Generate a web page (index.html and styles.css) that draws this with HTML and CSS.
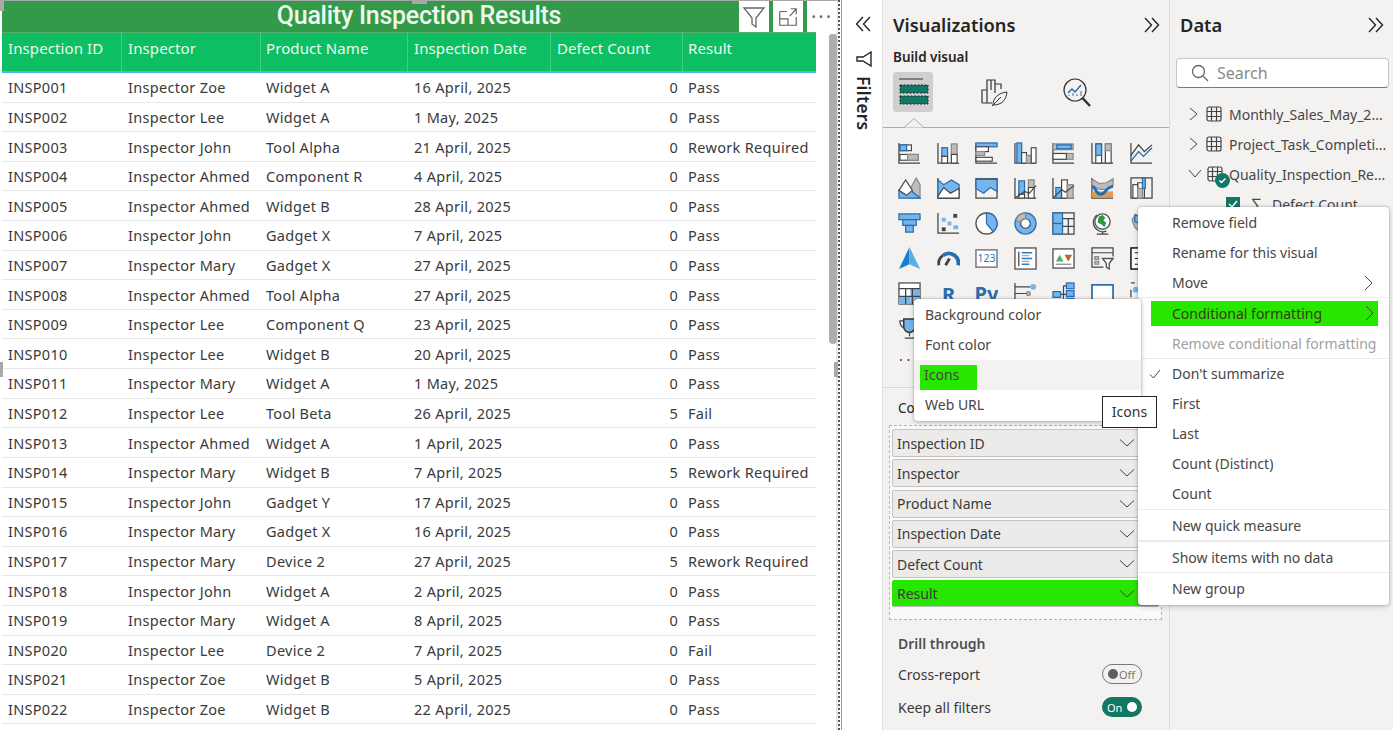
FILE: index.html
```html
<!DOCTYPE html>
<html lang="en">
<head>
<meta charset="utf-8">
<title>Quality Inspection Results</title>
<link rel="stylesheet" href="styles.css">
</head>
<body>
<main class="report">
  <header class="title-bar"><h1>Quality Inspection Results</h1></header>
  <div class="visual-actions">
    <span class="action"><svg viewBox="0 0 24 24" width="24" height="24"><path class="thin" d="M2 3h20l-8 10v9l-4-3v-6z"/></svg></span>
    <span class="action"><svg viewBox="0 0 24 24" width="22" height="22"><path class="thin" d="M3 6h8M3 6v15h18v-9M3 14h9v7M14 11l7-8M15 3h6v6"/></svg></span>
    <span class="action dots">···</span>
  </div>
  <div class="table">
    <div class="row head"><span>Inspection ID</span><span>Inspector</span><span>Product Name</span><span>Inspection Date</span><span>Defect Count</span><span>Result</span></div>
    <div class="row"><span>INSP001</span><span>Inspector Zoe</span><span>Widget A</span><span>16 April, 2025</span><span class="num">0</span><span>Pass</span></div>
    <div class="row"><span>INSP002</span><span>Inspector Lee</span><span>Widget A</span><span>1 May, 2025</span><span class="num">0</span><span>Pass</span></div>
    <div class="row"><span>INSP003</span><span>Inspector John</span><span>Tool Alpha</span><span>21 April, 2025</span><span class="num">0</span><span>Rework Required</span></div>
    <div class="row"><span>INSP004</span><span>Inspector Ahmed</span><span>Component R</span><span>4 April, 2025</span><span class="num">0</span><span>Pass</span></div>
    <div class="row"><span>INSP005</span><span>Inspector Ahmed</span><span>Widget B</span><span>28 April, 2025</span><span class="num">0</span><span>Pass</span></div>
    <div class="row"><span>INSP006</span><span>Inspector John</span><span>Gadget X</span><span>7 April, 2025</span><span class="num">0</span><span>Pass</span></div>
    <div class="row"><span>INSP007</span><span>Inspector Mary</span><span>Gadget X</span><span>27 April, 2025</span><span class="num">0</span><span>Pass</span></div>
    <div class="row"><span>INSP008</span><span>Inspector Ahmed</span><span>Tool Alpha</span><span>27 April, 2025</span><span class="num">0</span><span>Pass</span></div>
    <div class="row"><span>INSP009</span><span>Inspector Lee</span><span>Component Q</span><span>23 April, 2025</span><span class="num">0</span><span>Pass</span></div>
    <div class="row"><span>INSP010</span><span>Inspector Lee</span><span>Widget B</span><span>20 April, 2025</span><span class="num">0</span><span>Pass</span></div>
    <div class="row"><span>INSP011</span><span>Inspector Mary</span><span>Widget A</span><span>1 May, 2025</span><span class="num">0</span><span>Pass</span></div>
    <div class="row"><span>INSP012</span><span>Inspector Lee</span><span>Tool Beta</span><span>26 April, 2025</span><span class="num">5</span><span>Fail</span></div>
    <div class="row"><span>INSP013</span><span>Inspector Ahmed</span><span>Widget A</span><span>1 April, 2025</span><span class="num">0</span><span>Pass</span></div>
    <div class="row"><span>INSP014</span><span>Inspector Mary</span><span>Widget B</span><span>7 April, 2025</span><span class="num">5</span><span>Rework Required</span></div>
    <div class="row"><span>INSP015</span><span>Inspector John</span><span>Gadget Y</span><span>17 April, 2025</span><span class="num">0</span><span>Pass</span></div>
    <div class="row"><span>INSP016</span><span>Inspector Mary</span><span>Gadget X</span><span>16 April, 2025</span><span class="num">0</span><span>Pass</span></div>
    <div class="row"><span>INSP017</span><span>Inspector Mary</span><span>Device 2</span><span>27 April, 2025</span><span class="num">5</span><span>Rework Required</span></div>
    <div class="row"><span>INSP018</span><span>Inspector John</span><span>Widget A</span><span>2 April, 2025</span><span class="num">0</span><span>Pass</span></div>
    <div class="row"><span>INSP019</span><span>Inspector Mary</span><span>Widget A</span><span>8 April, 2025</span><span class="num">0</span><span>Pass</span></div>
    <div class="row"><span>INSP020</span><span>Inspector Lee</span><span>Device 2</span><span>7 April, 2025</span><span class="num">0</span><span>Fail</span></div>
    <div class="row"><span>INSP021</span><span>Inspector Zoe</span><span>Widget B</span><span>5 April, 2025</span><span class="num">0</span><span>Pass</span></div>
    <div class="row"><span>INSP022</span><span>Inspector Zoe</span><span>Widget B</span><span>22 April, 2025</span><span class="num">0</span><span>Pass</span></div>
  </div>
  <div class="scrollbar"></div>
  <i class="handle handle-top"></i>
  <i class="handle handle-corner"></i>
  <i class="handle handle-left"></i>
  <i class="handle handle-right"></i>
</main>
<div class="splitter"></div>

<aside class="filters">
  <svg class="chev" viewBox="0 0 18 18" width="18" height="18"><path class="line" d="M8 2 1.500 9 8 16M15 2 8.500 9 15 16"/></svg>
  <svg class="funnel" viewBox="0 0 18 18" width="18" height="18"><path class="line" d="M16 2v14L8 11H2V7h6z"/></svg>
  <span class="filters-label">Filters</span>
</aside>

<section class="viz">
  <div class="pane-head"><h2>Visualizations</h2><svg viewBox="0 0 18 18" width="18" height="18"><path class="line" d="M3 2 9.500 9 3 16M10 2 16.500 9 10 16"/></svg></div>
  <h3 class="build">Build visual</h3>
  <div class="tabs">
    <span class="tab active"><svg viewBox="0 0 36 36" width="36" height="36"><path d="M4 5h24" stroke="#333" stroke-width="1"/><rect class="tealbar" x="5" y="11" width="28" height="8"/><rect class="tealbar" x="5" y="22" width="28" height="8"/></svg></span>
    <span class="tab"><svg viewBox="0 0 32 32" width="32" height="32"><path class="dark" d="M3 27V14h5V4h8v13M8 14v13M12 4v10M16 8h6v5M3 27h10"/><path d="M14 29c0-7 5-12 14-13-1 8-5 13-14 13z" fill="#f3f2f1" stroke="#333"/><path d="M13 30 22 21" stroke="#333"/></svg></span>
    <span class="tab"><svg viewBox="0 0 32 32" width="32" height="32"><circle class="dark" cx="14" cy="14" r="11"/><path d="M21.500 22 29 30" stroke="#333" stroke-width="2.500"/><path d="M7 17l4-4 3 3 6-7" fill="none" stroke="#1d6fb8" stroke-width="1.500"/><path d="M8 20v-1M12 20v-3M16 20v-2M20 20v-5" stroke="#666"/></svg></span>
  </div>
  <div class="tabline"><svg viewBox="0 0 22 10" width="22" height="10"><path d="M0 9.500h1L11 .5l10 9h1" fill="#f3f2f1" stroke="#aaa"/></svg></div>

  <div class="gallery">
    <svg viewBox="0 0 24 24"><path class="k" d="M1 1v21h22"/><rect class="w" x="2" y="3" width="12" height="6"/><rect class="b" x="2" y="3" width="7" height="6"/><rect class="w" x="2" y="13" width="19" height="6"/><rect class="g" x="10" y="13" width="11" height="6"/></svg>
    <svg viewBox="0 0 24 24"><path class="k" d="M1 1v21h22"/><rect class="b" x="5" y="6" width="6" height="9"/><rect class="w" x="5" y="15" width="6" height="7"/><rect class="g" x="15" y="2" width="6" height="11"/><rect class="w" x="15" y="13" width="6" height="9"/></svg>
    <svg viewBox="0 0 24 24"><path class="k" d="M1 1v21h22"/><rect class="b" x="1" y="1" width="22" height="4"/><rect class="w" x="1" y="5" width="13" height="5"/><rect class="g" x="1" y="10" width="9" height="4"/><rect class="w" x="1" y="16" width="17" height="4"/></svg>
    <svg viewBox="0 0 24 24"><path class="k" d="M1 1v21h22"/><rect class="b" x="3" y="1" width="5" height="21"/><rect class="w" x="8" y="11" width="5" height="11"/><rect class="g" x="13" y="14" width="5" height="8"/><rect class="w" x="18" y="6" width="5" height="16"/></svg>
    <svg viewBox="0 0 24 24"><path class="k" d="M1 1v21h22"/><rect class="g" x="1" y="2" width="21" height="6"/><rect class="b" x="5" y="3" width="15" height="4"/><rect class="g" x="1" y="12" width="21" height="6"/><rect class="w" x="1" y="12" width="14" height="6"/></svg>
    <svg viewBox="0 0 24 24"><path class="k" d="M1 1v21h22"/><rect class="w" x="5" y="2" width="6" height="20"/><rect class="b" x="5" y="2" width="6" height="12"/><rect class="w" x="15" y="2" width="6" height="20"/><rect class="g" x="15" y="2" width="6" height="7"/></svg>
    <svg viewBox="0 0 24 24"><path class="k" d="M1 1v21h22"/><path class="l" d="M1 20 9 10l5 5 9-9"/><path class="kl" d="M1 14 9 3l6 7 8-7"/></svg>

    <svg viewBox="0 0 24 24"><path class="g" d="M13 12 19 1l4 7v14H12z"/><path class="b" d="M1 22v-8l6 4 5-5 11 9z"/><path class="wk" d="M1 14 8 3l7 11-6 5z"/></svg>
    <svg viewBox="0 0 24 24"><path class="k" d="M1 1v21h22"/><path class="b" d="M1 3l6 5 8-5 8 5v14H1z"/><path class="w" d="M1 20l6-9 7 6 9-5v10H1z"/></svg>
    <svg viewBox="0 0 24 24"><path class="k" d="M1 1v21h22V1"/><path class="b" d="M1 2h22v13l-7-4-7 6-8-5z"/><path class="k" d="M1 2h22"/></svg>
    <svg viewBox="0 0 24 24"><path class="k" d="M1 1v21h22"/><rect class="b" x="5" y="4" width="6" height="14"/><rect class="w" x="5" y="18" width="6" height="4"/><rect class="g" x="15" y="3" width="6" height="8"/><rect class="w" x="15" y="11" width="6" height="11"/><path class="kl" d="M1 22l6-4 4-3 5 2 7-8"/></svg>
    <svg viewBox="0 0 24 24"><path class="k" d="M1 1v21h22"/><rect class="b" x="4" y="11" width="6" height="11"/><rect class="w" x="10" y="3" width="6" height="19"/><rect class="g" x="16" y="8" width="6" height="14"/><path class="kl" d="M1 22l9-9 4 3 9-7"/></svg>
    <svg viewBox="0 0 24 24"><path class="k" d="M1 1v21h22"/><path class="g" d="M1 2l8 5 7-1 7-4v7l-7 4H9L1 9z"/><path class="o" d="M1 15h22v6H1z"/><path class="l2" d="M1 10c5 0 3 8 9 8s5-8 13-8"/></svg>
    <svg viewBox="0 0 24 24"><path class="k" d="M1 22h22V1H1zM8 22V6h7v16"/><rect class="w" x="3" y="8" width="5" height="14"/><rect class="g" x="8" y="12" width="5" height="10"/><rect class="b" x="13" y="1" width="3" height="11"/></svg>

    <svg viewBox="0 0 24 24"><rect class="b" x="1" y="2" width="22" height="6"/><rect class="b" x="5" y="8" width="14" height="6"/><rect class="b" x="8" y="14" width="8" height="7"/></svg>
    <svg viewBox="0 0 24 24"><path class="k" d="M1 1v21h22"/><rect class="lb" x="5" y="6" width="4" height="4"/><rect class="lb" x="11" y="10" width="4" height="4"/><rect class="dk" x="17" y="2" width="4" height="4"/><rect class="dk" x="5" y="16" width="4" height="4"/><rect class="lb" x="17" y="14" width="5" height="4"/></svg>
    <svg viewBox="0 0 24 24"><circle class="wk" cx="12" cy="12" r="11"/><path class="b" d="M12 1a11 11 0 0 1 7 19.500L12 12z"/></svg>
    <svg viewBox="0 0 24 24"><circle class="b" cx="12" cy="12" r="11"/><circle class="w" cx="12" cy="12" r="5"/><path class="g" d="M12 1A11 11 0 0 0 2 9l5 1.500A5 5 0 0 1 12 7z"/></svg>
    <svg viewBox="0 0 24 24"><path class="k" d="M1 1h22v22H1z"/><rect class="b" x="1" y="1" width="10" height="11"/><rect class="b" x="1" y="12" width="10" height="11"/><path class="k" d="M11 7h12M17 7v16M11 15h12"/></svg>
    <svg viewBox="0 0 24 24"><circle class="wk" cx="12" cy="10" r="8"/><path d="M8 5l4-2 3 3-2 3 3 2-2 5-3-3-4-2z" fill="#2c9a45"/><path class="k" d="M6 3a10 10 0 0 0 10 17M12 20v3M6 23h12"/></svg>
    <svg viewBox="0 0 24 24"><path class="g" d="M2 8 6 3l6 3 6-3 2 6-3 9-5 4-7-6z"/><path class="b" d="M5 3l7 2 6-2v8l-6 2-7-3z"/></svg>

    <svg viewBox="0 0 24 24"><path d="M12 0 1 23l11-5z" fill="#1b7fd0"/><path d="M12 0l11 23-11-5z" fill="#5aaee8"/></svg>
    <svg viewBox="0 0 24 24"><path class="kh" d="M2 19a10 10 0 0 1 4-10"/><path class="bh" d="M6 9a10 10 0 0 1 16 10"/><path class="kh" d="M9 19l4-7"/></svg>
    <svg viewBox="0 0 24 24"><rect class="wg" x="1" y="3" width="22" height="18"/><text class="ico-text" x="12" y="16">123</text></svg>
    <svg viewBox="0 0 24 24"><rect class="wk" x="1" y="1" width="22" height="22"/><path class="k" d="M5 5v15"/><path class="bl" d="M8 6h11M8 12h11M8 18h8"/><path class="gl" d="M8 9h8M8 15h8"/></svg>
    <svg viewBox="0 0 24 24"><rect class="wk" x="1" y="2" width="22" height="20"/><path d="M4 15l4-7 4 7z" fill="#4caf6a"/><path d="M13 8h8l-4 7z" fill="#b06a2c"/><path class="g" d="M4 18h16"/></svg>
    <svg viewBox="0 0 24 24"><path class="k" d="M13 21H1V1h22v9M1 6h22"/><path class="g" d="M4 10h4v3H4zM4 15h4v3H4z"/><path class="wk" d="M12 12h11l-4 5v6l-3-2v-4z"/></svg>
    <svg viewBox="0 0 24 24"><rect class="w" x="1" y="1" width="22" height="22"/><path class="k2" d="M1 1h22v22H1zM5 6h18M5 12h18M5 18h18"/></svg>

    <svg viewBox="0 0 24 24"><rect class="wk" x="1" y="1" width="22" height="22"/><rect class="lb" x="13" y="7" width="10" height="16"/><rect class="lb" x="1" y="15" width="12" height="8"/><path class="k" d="M1 7h22M1 15h22M8 7v16M15 7v16"/></svg>
    <svg viewBox="0 0 24 24"><text class="ico-r" x="12" y="21">R</text></svg>
    <svg viewBox="0 0 24 24"><text class="ico-py" x="12" y="20">Py</text></svg>
    <svg viewBox="0 0 24 24"><path class="k" d="M1 1v21M1 5h16M1 12h12M1 19h6"/><circle class="lb" cx="20" cy="5" r="3"/><circle class="g" cx="15" cy="12" r="2"/></svg>
    <svg viewBox="0 0 24 24"><rect class="b" x="1" y="10" width="8" height="6"/><rect class="b" x="15" y="1" width="8" height="6"/><rect class="b" x="15" y="9" width="8" height="6"/><rect class="b" x="15" y="17" width="8" height="6"/><path class="k" d="M9 13h6M12 4v16h3M12 4h3"/></svg>
    <svg viewBox="0 0 24 24"><rect class="bw" x="1" y="3" width="22" height="17"/></svg>
    <svg viewBox="0 0 24 24"><path class="k" d="M1 1h4M19 1h4M1 8v8M23 8v8"/><circle class="lb" cx="6" cy="8" r="3"/></svg>

    <svg viewBox="0 0 24 24"><path class="kb" d="M6 2h12v8a6 6 0 0 1-12 0z"/><path class="k" d="M6 4H2c0 5 2 7 5 8M18 4h4c0 5-2 7-5 8M12 16v4M7 22h10"/></svg>
  </div>

  <div class="more">· · ·</div>
  <div class="rule"></div>
  <div class="columns-label">Columns</div>
  <div class="well">
    <div class="field"><span>Inspection ID</span><svg viewBox="0 0 16 16" width="16" height="16"><path class="line-thin" d="M1 4.500 8 11l7-6.500"/></svg></div>
    <div class="field"><span>Inspector</span><svg viewBox="0 0 16 16" width="16" height="16"><path class="line-thin" d="M1 4.500 8 11l7-6.500"/></svg></div>
    <div class="field"><span>Product Name</span><svg viewBox="0 0 16 16" width="16" height="16"><path class="line-thin" d="M1 4.500 8 11l7-6.500"/></svg></div>
    <div class="field"><span>Inspection Date</span><svg viewBox="0 0 16 16" width="16" height="16"><path class="line-thin" d="M1 4.500 8 11l7-6.500"/></svg></div>
    <div class="field"><span>Defect Count</span><svg viewBox="0 0 16 16" width="16" height="16"><path class="line-thin" d="M1 4.500 8 11l7-6.500"/></svg></div>
    <div class="field hot"><span>Result</span><svg viewBox="0 0 16 16" width="16" height="16"><path class="line-thin" d="M1 4.500 8 11l7-6.500"/></svg></div>
  </div>
  <h4 class="drill">Drill through</h4>
  <div class="toggle-row"><span>Cross-report</span><span class="toggle off"><i></i>Off</span></div>
  <div class="toggle-row second"><span>Keep all filters</span><span class="toggle on">On<i></i></span></div>
</section>

<section class="data">
  <div class="pane-head"><h2>Data</h2><svg viewBox="0 0 18 18" width="18" height="18"><path class="line" d="M3 2 9.500 9 3 16M10 2 16.500 9 10 16"/></svg></div>
  <div class="search"><svg viewBox="0 0 18 18" width="18" height="18"><circle class="thin" cx="7.500" cy="7.500" r="6"/><path class="thin" d="M12 12l5 5"/></svg><span>Search</span></div>
  <ul class="tree">
    <li><svg class="caret" viewBox="0 0 12 14" width="12" height="14"><path class="line-thin" d="M2 1l7 6-7 6"/></svg><svg class="tbl" viewBox="0 0 16 16" width="16" height="16"><path class="grid-ico" d="M3 1h10a2 2 0 0 1 2 2v10a2 2 0 0 1-2 2H3a2 2 0 0 1-2-2V3a2 2 0 0 1 2-2zM1 5.500h14M1 10.500h14M5.500 1v14M10.500 1v14"/></svg><span>Monthly_Sales_May_2...</span></li>
    <li><svg class="caret" viewBox="0 0 12 14" width="12" height="14"><path class="line-thin" d="M2 1l7 6-7 6"/></svg><svg class="tbl" viewBox="0 0 16 16" width="16" height="16"><path class="grid-ico" d="M3 1h10a2 2 0 0 1 2 2v10a2 2 0 0 1-2 2H3a2 2 0 0 1-2-2V3a2 2 0 0 1 2-2zM1 5.500h14M1 10.500h14M5.500 1v14M10.500 1v14"/></svg><span>Project_Task_Completi...</span></li>
    <li><svg class="caret" viewBox="0 0 14 12" width="14" height="12"><path class="line-thin" d="M1 2l6 7 6-7"/></svg><span class="tbl-wrap"><svg class="tbl" viewBox="0 0 16 16" width="16" height="16"><path class="grid-ico" d="M3 1h10a2 2 0 0 1 2 2v10a2 2 0 0 1-2 2H3a2 2 0 0 1-2-2V3a2 2 0 0 1 2-2zM1 5.500h14M1 10.500h14M5.500 1v14M10.500 1v14"/></svg><svg class="badge" viewBox="0 0 15 15" width="15" height="15"><circle cx="7.500" cy="7.500" r="7.500" fill="#117865"/><path d="M4.500 7.500l2 2 4-4" fill="none" stroke="#fff" stroke-width="1.500"/></svg></span><span>Quality_Inspection_Re...</span></li>
    <li class="leaf"><span class="check"><svg viewBox="0 0 14 14" width="14" height="14"><path d="M3 7l3 3 5-6" fill="none" stroke="#fff" stroke-width="1.500"/></svg></span><span class="sigma">∑</span><span>Defect Count</span></li>
  </ul>
</section>

<nav class="menu context">
  <div class="mi">Remove field</div>
  <div class="mi">Rename for this visual</div>
  <div class="mi sep">Move<svg viewBox="0 0 10 16" width="10" height="16"><path class="line-thin" d="M1 1l7 7-7 7"/></svg></div>
  <div class="mi hot-item"><span>Conditional formatting</span><svg viewBox="0 0 10 16" width="10" height="16"><path class="line-thin" d="M1 1l7 7-7 7"/></svg></div>
  <div class="mi muted sep">Remove conditional formatting</div>
  <div class="mi"><svg class="tick" viewBox="0 0 12 12" width="12" height="12"><path class="line-thin" d="M1 6.500 4.500 10 11 2"/></svg>Don't summarize</div>
  <div class="mi">First</div>
  <div class="mi">Last</div>
  <div class="mi">Count (Distinct)</div>
  <div class="mi sep">Count</div>
  <div class="mi sep tall">New quick measure</div>
  <div class="mi sep low">Show items with no data</div>
  <div class="mi low">New group</div>
</nav>
<nav class="menu submenu">
  <div class="si">Background color</div>
  <div class="si">Font color</div>
  <div class="si current"><span>Icons</span></div>
  <div class="si">Web URL</div>
</nav>
<div class="tooltip">Icons</div>
</body>
</html>
```
FILE: styles.css
```css
* { box-sizing: border-box; }
html, body { margin: 0; height: 730px; overflow: hidden; }
body {
  display: flex;
  width: 1393px;
  background: #fff;
  color: #252423;
  font-family: "Noto Sans", "Open Sans", sans-serif;
  font-size: 14px;
  position: relative;
}
h1, h2, h3, h4 { margin: 0; }
svg { display: block; flex: none; }
.thin, .dark, .line, .line-thin, .grid-ico { fill: none; stroke: #333; }
.thin { stroke: #666; stroke-width: 1.3; }
.dark { stroke: #333; stroke-width: 1.2; }
.line { stroke: #252423; stroke-width: 1.4; }
.line-thin { stroke: #444; stroke-width: 1; }
.grid-ico { stroke: #444; stroke-width: 1.2; }

/* report canvas */
.report { width: 838px; height: 730px; position: relative; flex: none; padding-left: 2px; border-top: 1px solid #a8a8a8; border-right: 2px solid #e4e4e4; }
.title-bar { height: 31px; background: #339a4a; text-align: center; }
.title-bar h1 { font-family: Roboto, sans-serif; font-size: 25px; font-weight: 500; line-height: 29px; color: #eef7ee; letter-spacing: -.25px; }
.visual-actions { position: absolute; top: 0; right: -1px; display: flex; gap: 4px; }
.action { width: 30px; height: 31px; background: #fff; display: flex; align-items: center; justify-content: center; color: #666; }
.dots { font-size: 20px; letter-spacing: 2px; }
.table { width: 814px; border-top: 1px solid #57ad6e; }
.row {
  display: grid;
  grid-template-columns: 120px 139px 147px 143px 132px 1fr;
  height: 29.62px;
  align-items: center;
  border-bottom: 1px solid #e8e8e8;
  font-size: 14.5px;
  letter-spacing: .3px;
  color: #3a3a3a;
  white-space: nowrap;
}
.row > span { padding-left: 6px; }
.row > .num { padding: 0 5px 0 0; text-align: right; }
.row > span:nth-child(3), .row > span:nth-child(6) { padding-left: 5px; }
.head { height: 40px; background: #0dbf62; color: #eef9f2; font-size: 15px; letter-spacing: .1px; border-bottom: 2px solid #4fb6e8; align-items: start; }
.head > span { line-height: 20px; padding-top: 5px; border-right: 1px solid #3cce83; height: 38px; }
.head > span:last-child { border-right: 0; }
.scrollbar { position: absolute; left: 829px; top: 33px; width: 8px; height: 310px; background: #b0aeac; border-radius: 3px 3px 4px 4px; }
.handle { position: absolute; background: #a9a9a9; }
.handle-top { left: 412px; top: 0; width: 15px; height: 3px; }
.handle-corner { left: 0; top: 0; width: 4px; height: 10px; }
.handle-left { left: 0; top: 361px; width: 3px; height: 15px; }
.handle-right { left: 834px; top: 361px; width: 4px; height: 15px; }

.splitter { width: 4px; flex: none; background: #fff; border-left: 2px dotted #555; border-right: 1px solid #999; }

/* filters rail */
.filters { width: 41px; flex: none; background: #fff; display: flex; flex-direction: column; align-items: center; padding: 15px 0 0 3px; border-right: 1px solid #e3e2e1; }
.funnel { margin-top: 17px; }
.filters-label { writing-mode: vertical-rl; margin-top: 8px; font-size: 17.5px; letter-spacing: .2px; font-weight: 600; color: #252423; }

/* visualizations */
.viz { width: 287px; flex: none; background: #f3f2f1; border-right: 1px solid #dcdbda; }
.pane-head { display: flex; align-items: center; justify-content: space-between; height: 25px; margin-top: 12px; padding: 0 9px 0 10px; }
.pane-head h2 { font-size: 18.3px; font-weight: 600; color: #252423; line-height: 25px; }
.build { font-size: 13.5px; font-weight: 600; margin: 11px 0 0 10px; line-height: 19px; color: #252423; }
.tabs { display: flex; margin: 5px 0 0 10px; height: 40px; }
.tab { width: 40px; height: 40px; display: flex; align-items: center; justify-content: center; margin-right: 42px; }
.tab.active { background: #cfcfcf; border-radius: 3px; }
.tealbar { fill: #117865; stroke: #222; stroke-dasharray: 2 1.500; }
.tabline { height: 1px; margin-top: 15px; background: #aaa; position: relative; }
.tabline svg { position: absolute; left: 20px; top: -9px; }
.gallery { display: grid; grid-template-columns: repeat(7, 23px); grid-auto-rows: 23px; column-gap: 15.6px; row-gap: 12px; padding: 14px 0 0 15px; height: 232px; }
.gallery svg { width: 23px; height: 23px; }
.gallery .k, .gallery .kl { fill: none; stroke: #444; stroke-width: 1.3; }
.gallery .b { fill: #75b5ec; stroke: #2a6cb0; stroke-width: 1.3; }
.gallery .g { fill: #bdbcbb; stroke: #8b8a89; stroke-width: 1.3; }
.gallery .w { fill: #fff; stroke: #444; stroke-width: 1.2; }
.gallery .wk { fill: #fff; stroke: #555; stroke-width: 1.4; }
.gallery .wg { fill: #fff; stroke: #777; stroke-width: 1.5; }
.gallery .bw { fill: #fff; stroke: #2a6cb0; stroke-width: 1.8; }
.gallery .l { fill: none; stroke: #2a6cb0; stroke-width: 1.4; }
.gallery .l2 { fill: none; stroke: #1d6fb8; stroke-width: 3; }
.gallery .o { fill: #e09a5a; stroke: none; }
.gallery .lb { fill: #75b5ec; stroke: none; }
.gallery .dk { fill: #444; stroke: none; }
.gallery .kh { fill: none; stroke: #444; stroke-width: 3; }
.gallery .bh { fill: none; stroke: #2a6cb0; stroke-width: 4; }
.gallery .bl { fill: none; stroke: #2a7cc8; stroke-width: 1.6; }
.gallery .gl { fill: none; stroke: #aaa; stroke-width: 1.4; }
.gallery .k2 { fill: none; stroke: #222; stroke-width: 1.3; }
.gallery .kb { fill: #75b5ec; stroke: #333; stroke-width: 1.5; }
.ico-text { font: 11px "Noto Sans", sans-serif; text-anchor: middle; fill: #2a7cc8; }
.ico-r { font: 700 21px "Noto Sans", sans-serif; text-anchor: middle; fill: #2a6cb0; }
.ico-py { font: 700 21px "Noto Sans", sans-serif; text-anchor: middle; fill: #2a6cb0; }
.more { font-size: 14px; margin: -8px 0 0 16px; height: 16px; line-height: 16px; color: #333; }
.rule { height: 1px; background: #d8d7d6; margin-top: 19px; }
.columns-label { margin: 11px 0 0 15px; height: 19px; line-height: 19px; font-size: 13.5px; }
.well { margin: 7px 7px 0 6px; height: 195px; border: 1px dashed #b5b4b3; padding: 3px 2px 0 2px; background: #fafafa; }
.field { height: 28px; margin-bottom: 2.3px; background: #edebe9; border: 1px solid #c4c3c2; border-radius: 2px; display: flex; justify-content: space-between; align-items: center; padding: 0 24px 0 4px; font-size: 14px; color: #3b3a39; }
.field.hot { background: #27e600; border-color: transparent; border-bottom-color: #bbb; height: 27px; }
.field svg { margin-right: -1px; }
.drill { font-size: 14px; font-weight: 600; color: #504f4e; margin: 14px 0 0 15px; line-height: 20px; }
.toggle-row { display: flex; justify-content: space-between; align-items: center; margin: 10px 27px 0 15px; height: 20px; font-size: 14px; color: #3b3a39; }
.toggle-row.second { margin-top: 13px; }
.toggle { width: 40px; height: 20px; border-radius: 10px; display: flex; align-items: center; font-size: 11px; }
.toggle i { width: 10px; height: 10px; border-radius: 50%; display: block; }
.toggle.off { border: 1px solid #777; color: #777; padding-left: 5px; gap: 1px; }
.toggle.off i { background: #605e5c; }
.toggle.on { background: #117865; color: #fff; padding: 0 5px; justify-content: space-between; }
.toggle.on i { background: #fff; }

/* data pane */
.data { flex: 1; background: #f3f2f1; }
.search { margin: 21px 4px 0 6px; height: 30px; background: #fff; border: 1px solid #c8c6c4; border-bottom-color: #777; border-radius: 4px; display: flex; align-items: center; gap: 8px; padding-left: 14px; font-size: 16px; color: #8a8886; }
.tree { list-style: none; margin: 11px 0 0; padding: 0; }
.tree li { display: flex; align-items: center; height: 30px; font-size: 14px; color: #484644; white-space: nowrap; overflow: hidden; padding-left: 18px; }
.tree .caret { margin-right: 6px; }
.tree .tbl { margin-right: 7px; }
.tree li:nth-child(3) .caret { margin-right: 5px; }
.tree li:nth-child(3) .tbl { margin-right: 0; }
.tbl-wrap { position: relative; width: 22px; height: 16px; }
.badge { position: absolute; left: 8px; top: 7px; }
.tree .leaf { padding-left: 56px; }
.check { width: 14px; height: 14px; background: #117865; margin-right: 11px; }
.sigma { width: 14px; margin-right: 7px; font-size: 16px; }

/* overlays */
.menu { position: absolute; background: #fff; border-radius: 4px; box-shadow: 0 0 3px rgba(0,0,0,.3), 0 2px 6px rgba(0,0,0,.15); font-size: 14px; color: #484644; white-space: nowrap; }
.context { left: 1138px; top: 207px; width: 251px; height: 398px; padding-top: 1px; }
.mi { height: 30px; line-height: 30px; padding-left: 34px; position: relative; }
.mi svg { position: absolute; right: 15px; top: 7px; }
.mi .tick { position: absolute; left: 11px; right: auto; top: 9px; }
.mi.sep { border-bottom: 1px solid #edebe9; }
.mi:nth-child(10) { height: 31px; }
.mi.tall { height: 32px; line-height: 32px; border-bottom-width: 2px; }
.mi.low { height: 31px; line-height: 32px; }
.mi.muted { color: #a19f9d; }
.hot-item { background: #27e600; height: 25px; line-height: 25px; margin: 3px 11px 3px 13px; padding-left: 21px; color: #3a3a1a; }
.hot-item svg { right: 3px; top: 4px; }
.submenu { left: 914px; top: 299px; width: 227px; height: 122px; padding-top: 1px; }
.si { height: 30px; line-height: 30px; padding-left: 11px; }
.si.current { background: #f3f2f1; }
.si.current span { display: block; background: #27e600; width: 57px; height: 25px; line-height: 20px; margin: 0 0 0 -5px; padding-left: 4px; position: relative; top: 5px; }
.tooltip { position: absolute; left: 1102px; top: 396px; width: 55px; height: 32px; line-height: 29px; text-align: center; background: #fff; border: 1px solid #222; font-size: 14px; color: #333; }
```
